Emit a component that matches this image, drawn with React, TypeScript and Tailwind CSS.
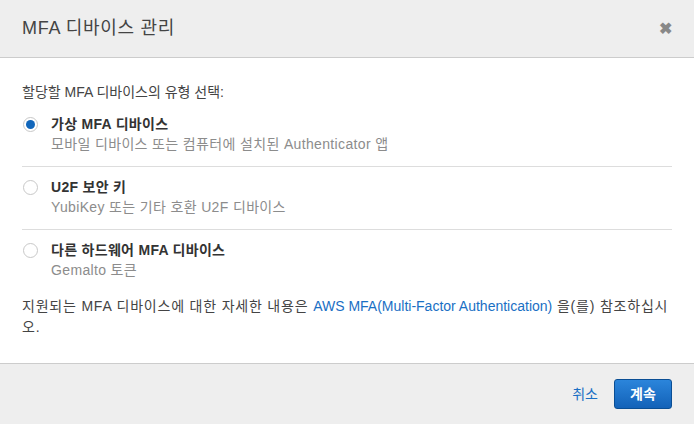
import React, { useState } from 'react';

const options = [
  { id: 'virtual', label: '가상 MFA 디바이스', desc: '모바일 디바이스 또는 컴퓨터에 설치된 Authenticator 앱' },
  { id: 'u2f', label: 'U2F 보안 키', desc: 'YubiKey 또는 기타 호환 U2F 디바이스' },
  { id: 'hw', label: '다른 하드웨어 MFA 디바이스', desc: 'Gemalto 토큰' },
];

function Radio({ checked }: { checked: boolean }) {
  return (
    <span className="w-[15px] h-[15px] rounded-full border border-[#c8c8c8] bg-white flex items-center justify-center shrink-0">
      {checked && <span className="w-[9px] h-[9px] rounded-full bg-[#1166bb]" />}
    </span>
  );
}

export default function App() {
  const [selected, setSelected] = useState('virtual');
  return (
    <div className="w-[694px] h-[424px] flex flex-col bg-white text-[#444] font-['Liberation_Sans','Noto_Sans_CJK_KR',sans-serif]">
      <div className="h-[58px] bg-[#eeeeee] border-b border-[#cccccc] flex items-center justify-between pl-[22px] pr-[22px] shrink-0">
        <h1 className="text-[18px] tracking-[0.7px] text-[#444]">MFA 디바이스 관리</h1>
        <span className="text-[#888] text-[16px] font-bold leading-none">✖</span>
      </div>
      <div className="flex-1 px-[22px] pt-[24px]">
        <p className="text-[14px] leading-[20px] mb-[2px]">할당할 MFA 디바이스의 유형 선택:</p>
        {options.map((o, i) => (
          <div
            key={o.id}
            onClick={() => setSelected(o.id)}
            className={`flex gap-[13px] pt-[10px] pb-[12px] cursor-pointer ${i < options.length - 1 ? 'border-b border-[#dddddd]' : ''}`}
          >
            <div className="h-[20px] flex items-center pl-px">
              <Radio checked={selected === o.id} />
            </div>
            <div>
              <div className="text-[14px] leading-[20px] font-bold tracking-[0.3px] text-[#333]">{o.label}</div>
              <div className="text-[14px] leading-[20px] tracking-[0.35px] text-[#8c8c8c]">{o.desc}</div>
            </div>
          </div>
        ))}
        <p className="text-[14px] leading-[21px] mt-[4px] tracking-[0.8px]">
          지원되는 MFA 디바이스에 대한 자세한 내용은{' '}
          <a className="text-[#1a6fc4] tracking-normal">AWS MFA(Multi-Factor Authentication)</a> 을(를) 참조하십시오.
        </p>
      </div>
      <div className="h-[61px] bg-[#eeeeee] border-t border-[#cccccc] flex items-center justify-end gap-[16px] pr-[22px] shrink-0">
        <button className="text-[14px] text-[#1a6fc4]">취소</button>
        <button className="h-[30px] w-[58px] rounded-[3px] border border-[#0a4e94] bg-gradient-to-b from-[#2b85db] to-[#1362b8] text-white text-[14px] font-bold">
          계속
        </button>
      </div>
    </div>
  );
}
